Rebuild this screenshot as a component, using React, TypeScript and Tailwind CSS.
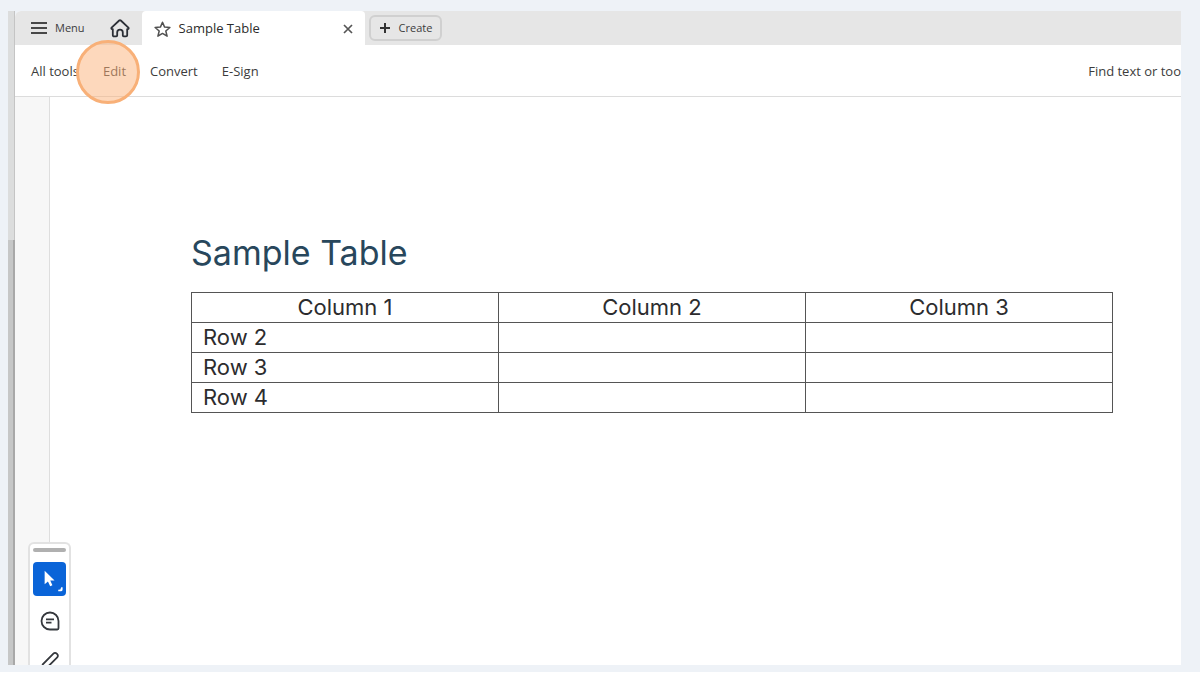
import type { ReactNode } from "react";

const columns = ["Column 1", "Column 2", "Column 3"];
const rows = ["Row 2", "Row 3", "Row 4"];

const TitleBar = () => (
  <header className="flex h-[34px] shrink-0 items-stretch bg-[#e6e6e6] text-[#3c3c3c]">
    <button className="flex items-center gap-2 pl-4 text-[11px]">
      <svg width="16" height="14" viewBox="0 0 16 14" stroke="#484848" strokeWidth="1.8">
        <path d="M0 2h16M0 7h16M0 12h16" />
      </svg>
      Menu
    </button>
    <div className="flex w-[57px] shrink-0 items-center justify-end pr-3">
      <button aria-label="Home">
        <svg width="20" height="19" viewBox="0 0 20 19" fill="none" stroke="#2b2f36" strokeWidth="1.8" strokeLinejoin="round">
          <path d="M9.2 1.5a1.2 1.2 0 0 1 1.6 0l7.6 7.2c.5.5.2 1.4-.5 1.4h-.7v6.1c0 .7-.5 1.2-1.2 1.2h-2.3c-.5 0-.9-.4-.9-.9v-3.1a2.8 2.8 0 0 0-5.6 0v3.1c0 .5-.4.9-.9.9H4c-.7 0-1.2-.5-1.2-1.2v-6.1h-.7c-.7 0-1-.9-.5-1.4z" />
        </svg>
      </button>
    </div>
    <div className="flex w-[223px] items-center gap-2 rounded-t bg-white px-3 pt-0.5 text-[13px] text-[#2c2c2c]">
      <button aria-label="Add to favorites">
        <svg width="17" height="17" viewBox="0 0 17 17" fill="none" stroke="#505050" strokeWidth="1.5" strokeLinejoin="round">
          <path d="M8.5 1.2l2.1 4.9 5.3.4-4.1 3.5 1.3 5.2-4.6-2.8-4.6 2.8 1.3-5.2L1.1 6.5l5.3-.4z" />
        </svg>
      </button>
      <span className="flex-1 font-medium">Sample Table</span>
      <button aria-label="Close tab">
        <svg width="10" height="10" viewBox="0 0 10 10" stroke="#555" strokeWidth="1.7">
          <path d="M1 1l8 8M9 1L1 9" />
        </svg>
      </button>
    </div>
    <button className="ml-1 flex h-[26px] items-center gap-2 self-center rounded-md border-2 border-[#d0d0d0] px-2 text-[11px]">
      <svg width="12" height="12" viewBox="0 0 12 12" stroke="#333" strokeWidth="2">
        <path d="M6 1v10M1 6h10" />
      </svg>
      Create
    </button>
  </header>
);

const Toolbar = () => (
  <nav className="flex h-[52px] shrink-0 items-center gap-6 border-b border-[#dcdcdc] pt-0.5 pl-4 text-[13px] text-[#3c3c3c]">
    <button>All tools</button>
    <button className="relative">
      Edit
      {/* click marker */}
      <span className="absolute top-1/2 right-[-14px] size-16 -translate-y-1/2 rounded-full border-3 border-[#f8b078] bg-[#fbb27a]/50" />
    </button>
    <button>Convert</button>
    <button>E-Sign</button>
    <button className="ml-auto whitespace-nowrap">Find text or too</button>
  </nav>
);

const ToolButton = ({ label, children }: { label: string; children: ReactNode }) => (
  <button aria-label={label} className="flex h-[34px] w-full items-center justify-center">
    {children}
  </button>
);

const QuickTools = () => (
  <aside className="absolute bottom-0 left-[13px] h-[123px] w-[43px] overflow-hidden rounded-t-md border-2 border-b-0 border-[#e2e2e2] bg-white px-[3px] pt-1">
    <div className="mb-[10px] h-1 rounded-full bg-[#b0b0b0]" />
    <button aria-label="Select" className="flex h-[34px] w-full items-center justify-center rounded-sm bg-[#0a64d8]">
      <svg width="34" height="34" viewBox="0 0 34 34" fill="#fff">
        <path d="M12 8.5v14l3.4-3 2.3 5 2.3-1-2.2-5h4.4z" />
        <path d="M30.5 25.5v2.2a2 2 0 0 1-2 2H26v-1.5l2.2-.5.8-2.2z" />
      </svg>
    </button>
    <div className="mt-2 flex flex-col gap-[6px]">
      <ToolButton label="Comment">
        <svg width="20" height="20" viewBox="0 0 20 20" fill="none" stroke="#35383d" strokeWidth="1.8">
          <path d="M10 1.5a8.5 8.5 0 0 1 8.5 8.5v7.3c0 .7-.5 1.2-1.2 1.2H10a8.5 8.5 0 0 1 0-17z" />
          <path d="M6 8.3h8M6 11.7h5.5" />
        </svg>
      </ToolButton>
      <ToolButton label="Draw">
        <svg width="20" height="20" viewBox="0 0 20 20" fill="none" stroke="#35383d" strokeWidth="1.8" strokeLinejoin="round">
          <path d="M1.5 18.5l1.2-5L13.4 2.6a2.3 2.3 0 0 1 3.3 0l.5.5a2.3 2.3 0 0 1 0 3.3L6.3 17.3z" />
        </svg>
      </ToolButton>
    </div>
  </aside>
);

const DocumentPage = () => (
  <main className="flex-1 pt-[134px] pr-[68px] pl-[141px] font-['Inter',sans-serif]">
    <h1 className="text-[34px] leading-[44px] text-[#28475c]">Sample Table</h1>
    <table className="mt-[17px] w-full table-fixed border-collapse text-[22px] leading-[29px] text-[#2c2c2e]">
      <thead>
        <tr>
          {columns.map((c) => (
            <th key={c} className="border border-[#555] p-0 font-normal">{c}</th>
          ))}
        </tr>
      </thead>
      <tbody>
        {rows.map((r) => (
          <tr key={r}>
            <td className="border border-[#555] py-0 pl-[11px]">{r}</td>
            <td className="border border-[#555]" />
            <td className="border border-[#555]" />
          </tr>
        ))}
      </tbody>
    </table>
  </main>
);

export default function App() {
  return (
    <div className="h-screen bg-white pb-[3px] font-['Open_Sans',sans-serif]">
      <div className="flex h-full bg-[#eef2f7] pt-[11px] pr-[19px] pb-[7px] pl-2">
        {/* edge of the window behind */}
        <div className="flex w-[7px] shrink-0 flex-col bg-[#dcdddd]">
          <div className="h-[35%] border-r border-[#c4c4c4]" />
          <div className="flex-1 border-r-2 border-[#a8a8a8] bg-[#c6c7c7]" />
        </div>
        <div className="relative flex min-w-0 flex-1 flex-col overflow-hidden rounded-tl-md bg-white">
          <TitleBar />
          <Toolbar />
          <div className="flex min-h-0 flex-1">
            <div className="w-[35px] shrink-0 border-r border-[#dedede] bg-[#f7f7f7]" />
            <DocumentPage />
          </div>
          <QuickTools />
        </div>
      </div>
    </div>
  );
}
